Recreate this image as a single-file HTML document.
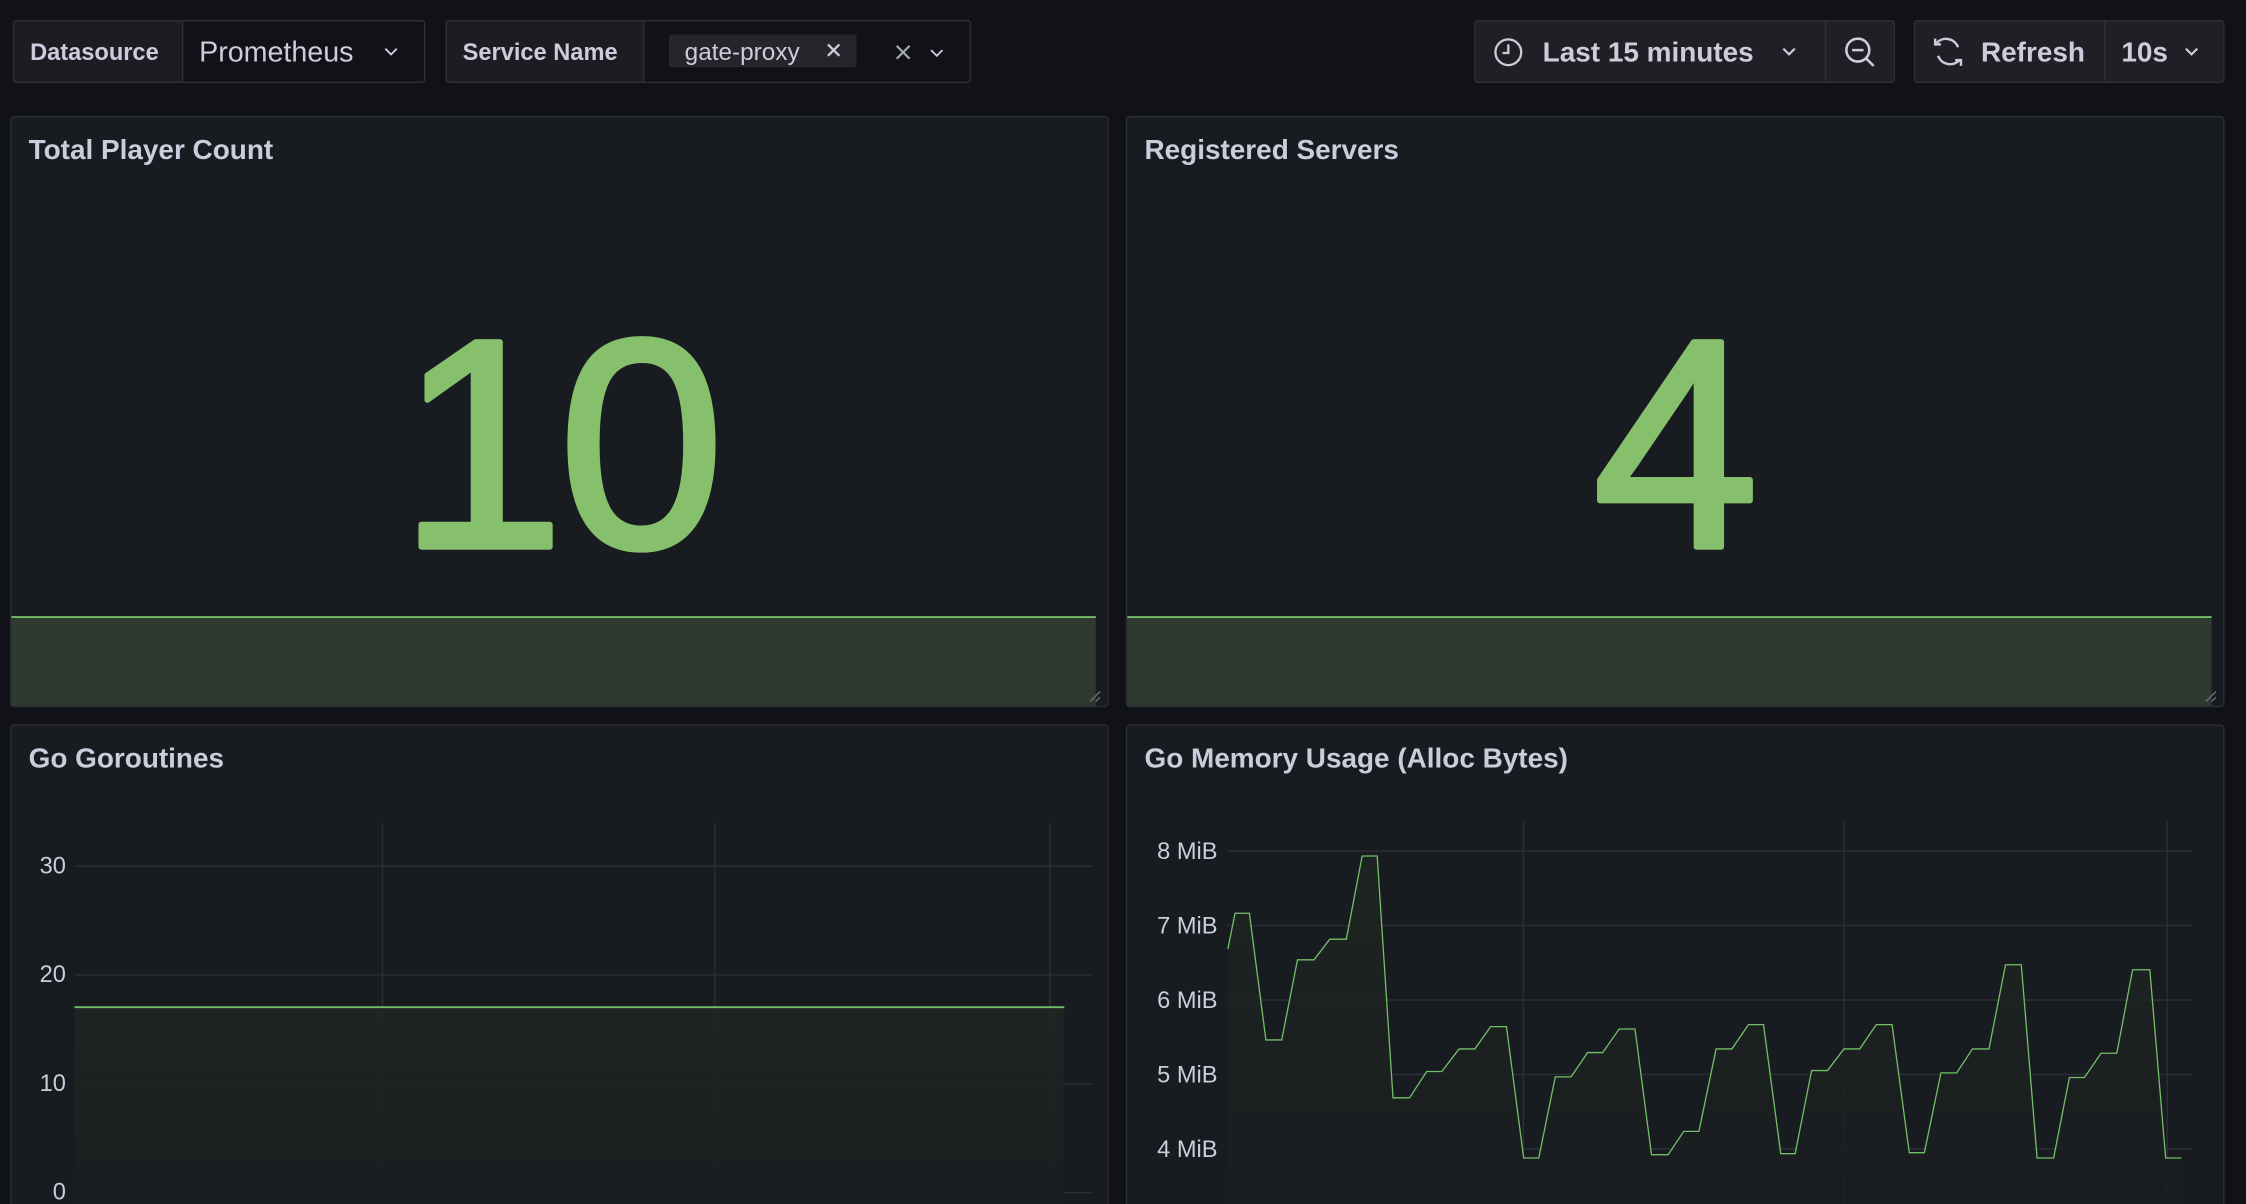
<!DOCTYPE html>
<html><head><meta charset="utf-8"><style>
html,body{margin:0;padding:0;background:#111217;width:2246px;height:1204px;overflow:hidden}
svg{display:block}
text{font-family:"Liberation Sans",sans-serif;fill:#ccccdc}
</style></head><body>
<svg width="2246" height="1204" viewBox="0 0 1568 841" preserveAspectRatio="none" xmlns="http://www.w3.org/2000/svg">
<defs>
<linearGradient id="g1" x1="0" y1="0" x2="0" y2="1"><stop offset="0" stop-color="#1f2622"/><stop offset="1" stop-color="#1a1d20"/></linearGradient>
</defs>
<rect width="1568" height="841" fill="#111217"/>
<g stroke="#2c2f36" stroke-width="1">
<rect x="9.5" y="14.5" width="287" height="43" rx="2" fill="#111217"/>
<rect x="9.5" y="14.5" width="118" height="43" rx="2" fill="#1b1d22"/>
<rect x="311.5" y="14.5" width="366" height="43" rx="2" fill="#111217"/>
<rect x="311.5" y="14.5" width="138" height="43" rx="2" fill="#1b1d22"/>
<rect x="1029.5" y="14.5" width="293" height="43" rx="2" fill="#1f2026"/>
<line x1="1274.5" y1="15" x2="1274.5" y2="57"/>
<rect x="1336.5" y="14.5" width="216" height="43" rx="2" fill="#1f2026"/>
<line x1="1469.5" y1="15" x2="1469.5" y2="57"/>
</g>
<text x="21" y="42" font-size="16.5" font-weight="bold">Datasource</text>
<text x="139" y="43" font-size="20">Prometheus</text>
<path d="M269 34l4 4 4-4" stroke="#ccccdc" fill="none" stroke-width="1.3"/>
<text x="323" y="42" font-size="16.5" font-weight="bold">Service Name</text>
<rect x="467" y="24" width="131" height="23" rx="2" fill="#24262c"/>
<text x="478" y="42" font-size="17">gate-proxy</text>
<path d="M578 31l8 8M586 31l-8 8" stroke="#ccccdc" stroke-width="1.6"/>
<path d="M626 32l9 9M635 32l-9 9" stroke="#a6a8b2" stroke-width="1.5"/>
<path d="M650 35l4 4 4-4" stroke="#ccccdc" fill="none" stroke-width="1.3"/>
<circle cx="1053" cy="36.5" r="9" stroke="#ccccdc" fill="none" stroke-width="1.6"/>
<path d="M1053 31v6h-4" stroke="#ccccdc" fill="none" stroke-width="1.6"/>
<text x="1077" y="43" font-size="19.5" font-weight="bold">Last 15 minutes</text>
<path d="M1245 34l4 4 4-4" stroke="#ccccdc" fill="none" stroke-width="1.5"/>
<circle cx="1297" cy="35" r="8" stroke="#ccccdc" fill="none" stroke-width="1.8"/>
<path d="M1293 35h8M1303 41l5 5" stroke="#ccccdc" stroke-width="1.8"/>
<path d="M1352 30a9 9 0 0 1 15 3M1368 42a9 9 0 0 1-15-3" stroke="#ccccdc" fill="none" stroke-width="1.7"/>
<path d="M1351 27v4h4M1369 46v-4h-4" stroke="#ccccdc" fill="none" stroke-width="1.7"/>
<text x="1383" y="43" font-size="19.5" font-weight="bold">Refresh</text>
<text x="1481" y="43" font-size="19.5" font-weight="bold">10s</text>
<path d="M1526 34l4 4 4-4" stroke="#ccccdc" fill="none" stroke-width="1.5"/>

<g stroke="#2a2d33" fill="#181b1f">
<rect x="7.5" y="81.5" width="766" height="412" rx="2"/>
<rect x="786.5" y="81.5" width="766" height="412" rx="2"/>
<rect x="7.5" y="506.5" width="766" height="340" rx="2"/>
<rect x="786.5" y="506.5" width="766" height="340" rx="2"/>
</g>
<text x="20" y="111" font-size="19.5" font-weight="bold">Total Player Count</text>
<text x="799" y="111" font-size="19.5" font-weight="bold">Registered Servers</text>
<text x="20" y="536" font-size="19.5" font-weight="bold">Go Goroutines</text>
<text x="799" y="536" font-size="19.5" font-weight="bold">Go Memory Usage (Alloc Bytes)</text>

<rect x="8" y="431" width="757" height="62" fill="#2e3a30"/>
<line x1="8" y1="431" x2="765" y2="431" stroke="#73bf69" stroke-width="1.3"/>
<rect x="787" y="431" width="757" height="62" fill="#2e3a30"/>
<line x1="787" y1="431" x2="1544" y2="431" stroke="#73bf69" stroke-width="1.3"/>
<path d="M761 490l7-7M765 490l3-3" stroke="#6a6d75" stroke-width="1"/>
<path d="M1540 490l7-7M1544 490l3-3" stroke="#6a6d75" stroke-width="1"/>
<text x="390" y="382" font-size="208" text-anchor="middle" style="fill:#86c06c;stroke:#86c06c;stroke-width:4;stroke-linejoin:round" letter-spacing="-4">10</text>
<text x="1170" y="382" font-size="208" text-anchor="middle" style="fill:#86c06c;stroke:#86c06c;stroke-width:4;stroke-linejoin:round">4</text>

<g stroke="#2c2f35" stroke-width="1">
<line x1="52" y1="605" x2="762" y2="605"/>
<line x1="52" y1="681" x2="762" y2="681"/>
<line x1="52" y1="757" x2="762" y2="757"/>
<line x1="52" y1="833" x2="762" y2="833"/>
<line x1="267" y1="575" x2="267" y2="841"/>
<line x1="499" y1="575" x2="499" y2="841"/>
<line x1="733" y1="575" x2="733" y2="841"/>
</g>
<rect x="52" y="704" width="691" height="140" fill="url(#g1)" opacity="0.9"/>
<line x1="52" y1="703.5" x2="743" y2="703.5" stroke="#73bf69" stroke-width="1.3"/>
<g font-size="16.5" text-anchor="end">
<text x="46" y="610">30</text><text x="46" y="686">20</text><text x="46" y="762">10</text><text x="46" y="838">0</text>
</g>

<g stroke="#2c2f35" stroke-width="1">
<line x1="857" y1="594.5" x2="1530" y2="594.5"/>
<line x1="857" y1="646.5" x2="1530" y2="646.5"/>
<line x1="857" y1="698.5" x2="1530" y2="698.5"/>
<line x1="857" y1="750.5" x2="1530" y2="750.5"/>
<line x1="857" y1="802.5" x2="1530" y2="802.5"/>
<line x1="1063.5" y1="574" x2="1063.5" y2="841"/>
<line x1="1287.5" y1="574" x2="1287.5" y2="841"/>
<line x1="1513" y1="574" x2="1513" y2="841"/>
</g>
<g font-size="16.5" text-anchor="end">
<text x="850" y="600">8 MiB</text><text x="850" y="652">7 MiB</text><text x="850" y="704">6 MiB</text><text x="850" y="756">5 MiB</text><text x="850" y="808">4 MiB</text>
</g>
<g transform="translate(782,502.7) scale(0.5013,0.2323)">
<polygon fill="url(#g1)" opacity="0.85" points="150,690 160,582 180,582 203,963 225,963 247,722 270,722 292,660 315,660 337,410 358,410 380,1137 403,1137 427,1058 448,1058 472,990 494,990 516,923 538,923 562,1318 583,1318 606,1074 628,1074 651,1001 672,1001 695,930 717,930 740,1308 763,1308 785,1238 806,1238 830,990 852,990 875,917 896,917 920,1305 940,1305 963,1055 985,1055 1008,990 1030,990 1053,917 1075,917 1099,1302 1120,1302 1143,1062 1165,1062 1187,990 1210,990 1233,737 1255,737 1277,1318 1300,1318 1322,1076 1343,1076 1366,1003 1388,1003 1410,752 1434,752 1456,1318 1478,1318 1478,1460 150,1460"/>
<polyline fill="none" stroke="#73bf69" stroke-width="1.3" vector-effect="non-scaling-stroke" points="150,690 160,582 180,582 203,963 225,963 247,722 270,722 292,660 315,660 337,410 358,410 380,1137 403,1137 427,1058 448,1058 472,990 494,990 516,923 538,923 562,1318 583,1318 606,1074 628,1074 651,1001 672,1001 695,930 717,930 740,1308 763,1308 785,1238 806,1238 830,990 852,990 875,917 896,917 920,1305 940,1305 963,1055 985,1055 1008,990 1030,990 1053,917 1075,917 1099,1302 1120,1302 1143,1062 1165,1062 1187,990 1210,990 1233,737 1255,737 1277,1318 1300,1318 1322,1076 1343,1076 1366,1003 1388,1003 1410,752 1434,752 1456,1318 1478,1318"/>
</g>
</svg>
</body></html>
